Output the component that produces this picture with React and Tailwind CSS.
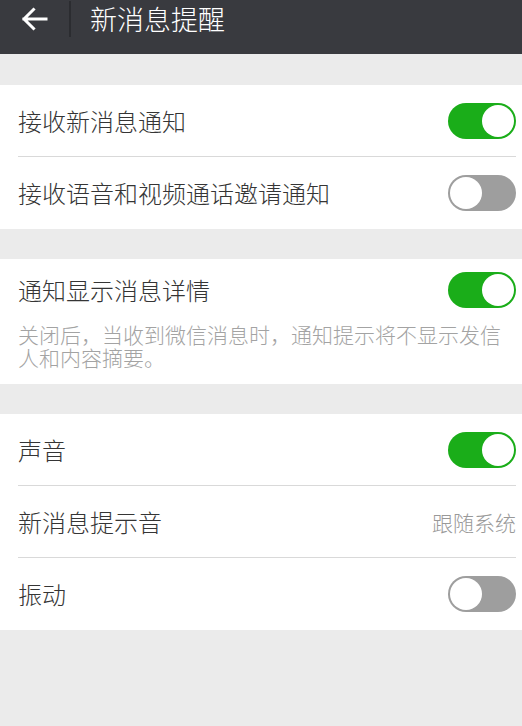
import React from "react";

const font = { fontFamily: '"Noto Sans CJK SC", "Noto Sans", sans-serif' };

function Toggle({ on }) {
  return (
    <div
      className={`w-[68px] h-[36px] rounded-full p-[2px] flex ${
        on ? "bg-[#1aad19] justify-end" : "bg-[#9e9e9e] justify-start"
      }`}
    >
      <div className="w-[32px] h-[32px] rounded-full bg-white" />
    </div>
  );
}

function Row({ label, right, last }) {
  return (
    <div className="pl-[18px] pr-[6px]">
      <div
        className={`h-[72px] flex items-center justify-between ${
          last ? "" : "border-b border-[#d9d9d9]"
        }`}
      >
        <span className="text-[24px] leading-[30px] font-light text-[#353535]">{label}</span>
        {right}
      </div>
    </div>
  );
}

export default function App() {
  return (
    <div className="w-[522px] h-[726px] bg-[#ebebeb] flex flex-col" style={font}>
      <div className="h-[54px] bg-[#393a3f] shrink-0">
        <div className="h-[38px] flex items-center">
          <div className="w-[69px] flex items-center pl-[20px]">
            <svg width="28" height="26" viewBox="0 0 28 26" fill="none">
              <path
                d="M26 13H4 M13.5 3.5L4 13l9.5 9.5"
                stroke="white"
                strokeWidth="3"
                strokeLinecap="square"
              />
            </svg>
          </div>
          <div className="w-[2px] h-[36px] bg-[#2b2c30]" />
          <span className="ml-[19px] text-[27px] leading-[34px] font-light text-white">新消息提醒</span>
        </div>
      </div>

      <div className="mt-[31px] bg-white">
        <Row label="接收新消息通知" right={<Toggle on />} />
        <Row label="接收语音和视频通话邀请通知" right={<Toggle on={false} />} last />
      </div>

      <div className="mt-[30px] bg-white pl-[18px] pr-[6px] pt-[13px] pb-[15px]">
        <div className="h-[36px] flex items-center justify-between">
          <span className="text-[24px] leading-[30px] font-light text-[#353535]">通知显示消息详情</span>
          <Toggle on />
        </div>
        <p className="mt-[15px] text-[21px] leading-[23px] font-light text-[#a3a3a3]">
          关闭后，当收到微信消息时，通知提示将不显示发信人和内容摘要。
        </p>
      </div>

      <div className="mt-[30px] bg-white">
        <Row label="声音" right={<Toggle on />} />
        <Row
          label="新消息提示音"
          right={<span className="text-[21px] leading-[26px] font-light text-[#999999]">跟随系统</span>}
        />
        <Row label="振动" right={<Toggle on={false} />} last />
      </div>
    </div>
  );
}
